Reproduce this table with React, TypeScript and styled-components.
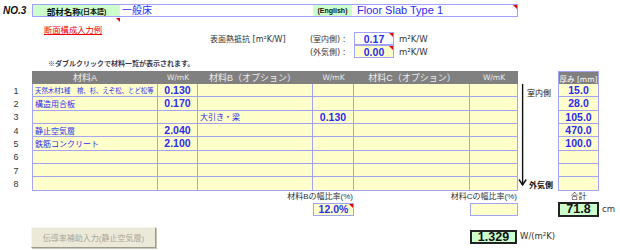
import React from "react";
import styled, { createGlobalStyle } from "styled-components";

const GlobalStyle = createGlobalStyle`
  html, body {
    margin: 0;
    padding: 0;
    background: #fff;
  }
  body {
    font-family: "Liberation Sans", "Noto Sans CJK JP", sans-serif;
  }
`;

// column widths shared by the table and the totals area
const COLS = "32px 126px 40px 115px 41px 116px 48px 40px 41px 21px";
const JP = `"Liberation Sans", "Noto Sans CJK JP", sans-serif`;
const VERDANA = `"DejaVu Sans", "Noto Sans CJK JP", sans-serif`;
const GRID = "#a3a3f5";
const BLUE = "#2b2bf0";

type Row = {
  a?: string;
  small?: boolean;
  wa?: string;
  b?: string;
  wb?: string;
  t?: string;
};

const rows: Row[] = [
  { a: "天然木材1種　檜、杉、えぞ松、とど松等", small: true, wa: "0.130", t: "15.0" },
  { a: "構造用合板", wa: "0.170", t: "28.0" },
  { b: "大引き・梁", wb: "0.130", t: "105.0" },
  { a: "静止空気層", wa: "2.040", t: "470.0" },
  { a: "鉄筋コンクリート", wa: "2.100", t: "100.0" },
  {},
  {},
  {},
];

export default function App() {
  return (
    <>
      <GlobalStyle />
      <Page>
        <TitleRow>
          <NoLabel>NO.3</NoLabel>
          <NameBar>
            <GreenTag $w={87}>
              <b>部材名称</b>
              <TagSmall>(日本語)</TagSmall>
            </GreenTag>
            <NameField $w={193}>一般床</NameField>
            <GreenTag $w={39}>
              <TagSmall>(English)</TagSmall>
            </GreenTag>
            <EnglishField>Floor Slab Type 1</EnglishField>
            <Corner />
          </NameBar>
        </TitleRow>

        <LinkRow>
          <LinkCell>
            <LinkText>断面構成入力例</LinkText>
            <Corner />
          </LinkCell>
        </LinkRow>

        <ResBlock>
          <ResRow>
            <ResTitle>表面熱抵抗 [m²K/W]</ResTitle>
            <SideLabel>(室内側) :</SideLabel>
            <InputBox $fill="#ffffff" $w={40}>
              0.17
              <Corner />
            </InputBox>
            <Unit>m²K/W</Unit>
          </ResRow>
          <ResRow>
            <ResTitle />
            <SideLabel>(外気側) :</SideLabel>
            <InputBox $fill="#ffffcc" $w={40}>
              0.00
              <Corner />
            </InputBox>
            <Unit>m²K/W</Unit>
          </ResRow>
        </ResBlock>

        <Note>※ダブルクリックで材料一覧が表示されます。</Note>

        <Table>
          <RowNum />
          <HeadCell $pr={20}>材料A</HeadCell>
          <HeadCell $small>W/mK</HeadCell>
          <HeadCell $pr={6}>材料B（オプション）</HeadCell>
          <HeadCell $small>W/mK</HeadCell>
          <HeadCell>材料C（オプション）</HeadCell>
          <HeadCell $small>W/mK</HeadCell>
          <Blank />
          <HeadCell $small $boxed>厚み [mm]</HeadCell>
          <Blank />

          <ArrowCol>
            <svg width="9" height="107" viewBox="0 0 9 107">
              <line x1="4.6" y1="0" x2="4.6" y2="101" stroke="#111" strokeWidth="1.4" />
              <polyline
                points="1,95.5 4.6,101 8.2,95.5"
                fill="none"
                stroke="#111"
                strokeWidth="1.4"
              />
            </svg>
            <SideTexts>
              <SideText>室内側</SideText>
              <SideText $bold>外気側</SideText>
            </SideTexts>
          </ArrowCol>

          {rows.map((r, i) => (
            <React.Fragment key={i}>
              <RowNum>{i + 1}</RowNum>
              <Cell $first>{r.a && <MatName $small={r.small}>{r.a}</MatName>}</Cell>
              <Cell $center>{r.wa && <Num>{r.wa}</Num>}</Cell>
              <Cell>{r.b && <MatName>{r.b}</MatName>}</Cell>
              <Cell $center>{r.wb && <Num>{r.wb}</Num>}</Cell>
              <Cell />
              <Cell />
              <Cell $first $center>{r.t && <Num>{r.t}</Num>}</Cell>
              <Blank />
            </React.Fragment>
          ))}
        </Table>

        <Totals>
          <SmallLabel $col="4 / 6" $row={1}>材料Bの幅比率(%)</SmallLabel>
          <SmallLabel $col="6 / 8" $row={1}>材料Cの幅比率(%)</SmallLabel>
          <SmallLabel $col="9" $row={1} $center>合計</SmallLabel>

          <Slot $col="5" $row={2}>
            <InputBox $fill="#ffffcc" $w={41}>
              12.0%
              <Corner />
            </InputBox>
          </Slot>
          <Slot $col="7" $row={2}>
            <InputBox $fill="#ffffcc" $w={48} />
          </Slot>
          <Slot $col="9" $row={2}>
            <ResultBox $w={41} $h={15} $shift={-1}>71.8</ResultBox>
          </Slot>
          <Slot $col="10" $row={2}>
            <Unit $pad={3} $top={1}>cm</Unit>
          </Slot>

          <Slot $col="2 / 4" $row={4}>
            <AuxButton disabled>伝導率補助入力(静止空気層)</AuxButton>
          </Slot>
          <Slot $col="7" $row={4}>
            <ResultBox $w={47} $h={14} $shift={3}>1.329</ResultBox>
          </Slot>
          <Slot $col="8 / 11" $row={4}>
            <Unit $pad={2} $top={4}>W/(m²K)</Unit>
          </Slot>
        </Totals>
      </Page>
    </>
  );
}

const Page = styled.div`
  width: 620px;
  height: 250px;
  overflow: hidden;
  background: #fff;
  color: #222;
`;

const TitleRow = styled.div`
  display: flex;
  align-items: center;
  height: 13px;
  padding-top: 4px;
`;

const NoLabel = styled.div`
  box-sizing: border-box;
  width: 32px;
  padding-left: 3px;
  font: italic bold 10px "Liberation Sans", sans-serif;
  color: #111;
`;

const NameBar = styled.div`
  position: relative;
  box-sizing: border-box;
  display: flex;
  width: 486px;
  height: 13px;
  border: 1px solid #a0a0ff;
  border-right-color: #a8a8a8;
`;

const GreenTag = styled.div<{ $w: number }>`
  width: ${(p) => p.$w}px;
  flex: none;
  background: #ccffcc;
  display: flex;
  align-items: center;
  justify-content: center;
  font-family: ${JP};
  font-size: 8.5px;
  color: #111;
  white-space: nowrap;
`;

const TagSmall = styled.span`
  font-size: 7px;
  font-weight: bold;
`;

const NameField = styled.div<{ $w: number }>`
  width: ${(p) => p.$w}px;
  flex: none;
  padding-left: 2px;
  box-sizing: border-box;
  font-family: ${JP};
  font-size: 10px;
  line-height: 11px;
  color: ${BLUE};
`;

const EnglishField = styled.div`
  flex: 1;
  padding-left: 5px;
  font: 11px "Liberation Sans", sans-serif;
  line-height: 11px;
  color: ${BLUE};
`;

const Corner = styled.span`
  position: absolute;
  top: 0;
  right: 0;
  width: 0;
  height: 0;
  border-top: 4px solid #e00000;
  border-left: 4px solid transparent;
`;

const LinkRow = styled.div`
  height: 13px;
`;

const LinkCell = styled.div`
  position: relative;
  box-sizing: border-box;
  margin-left: 32px;
  width: 88px;
  height: 13px;
  padding: 1px 0 0 12px;
  margin-top: 1px;
`;

const LinkText = styled.span`
  font-family: ${JP};
  font-size: 8.3px;
  line-height: 11px;
  color: #f00000;
  text-decoration: underline;
`;

const ResBlock = styled.div`
  padding-top: 1px;
`;

const ResRow = styled.div`
  display: flex;
  align-items: center;
  height: 13px;
`;

const ResTitle = styled.div`
  margin-left: 210px;
  width: 100px;
  font-family: ${VERDANA};
  font-size: 8px;
  color: #333;
  white-space: nowrap;
`;

const SideLabel = styled.div`
  width: 44px;
  font-family: ${VERDANA};
  font-size: 8px;
  color: #333;
  white-space: nowrap;
`;

const InputBox = styled.div<{ $fill: string; $w: number }>`
  position: relative;
  box-sizing: border-box;
  width: ${(p) => p.$w}px;
  height: 13px;
  background: ${(p) => p.$fill};
  border: 1px solid ${GRID};
  display: flex;
  align-items: center;
  justify-content: center;
  font: bold 10.5px "Liberation Sans", sans-serif;
  color: ${BLUE};
`;

const Unit = styled.div<{ $pad?: number; $top?: number }>`
  padding-left: ${(p) => p.$pad ?? 5}px;
  padding-top: ${(p) => p.$top ?? 0}px;
  font-family: ${VERDANA};
  font-size: 8.5px;
  color: #333;
  white-space: nowrap;
`;

const Note = styled.div`
  height: 13px;
  padding-left: 48px;
  font-family: ${JP};
  font-size: 7px;
  font-weight: bold;
  line-height: 12px;
  color: #3a3a55;
`;

const Table = styled.div`
  display: grid;
  grid-template-columns: ${COLS};
  grid-template-rows: 13px repeat(8, 13.33px);
`;

const RowNum = styled.div`
  display: flex;
  align-items: center;
  justify-content: center;
  font: 9px "Liberation Sans", sans-serif;
  color: #333;
`;

const Blank = styled.div``;

const HeadCell = styled.div<{ $small?: boolean; $boxed?: boolean; $pr?: number }>`
  box-sizing: border-box;
  background: #808080;
  color: #ececec;
  display: flex;
  align-items: center;
  justify-content: center;
  padding-right: ${(p) => p.$pr ?? 0}px;
  font-family: ${(p) => (p.$small ? VERDANA : JP)};
  font-size: ${(p) => (p.$small ? 7.5 : 9)}px;
  white-space: nowrap;
  ${(p) => p.$boxed && `border: 1px solid ${GRID}; border-bottom: none; color: #fff;`}
`;

const Cell = styled.div<{ $first?: boolean; $center?: boolean }>`
  box-sizing: border-box;
  background: #ffffcc;
  border-right: 1px solid ${GRID};
  border-bottom: 1px solid ${GRID};
  ${(p) => p.$first && `border-left: 1px solid ${GRID};`}
  display: flex;
  align-items: center;
  justify-content: ${(p) => (p.$center ? "center" : "flex-start")};
  padding: 0 2px;
  overflow: hidden;
  white-space: nowrap;
`;

const MatName = styled.span<{ $small?: boolean }>`
  font-family: ${JP};
  font-size: ${(p) => (p.$small ? 6.4 : 8)}px;
  color: ${BLUE};
`;

const Num = styled.span`
  font: bold 10.5px "Liberation Sans", sans-serif;
  color: ${BLUE};
`;

const ArrowCol = styled.div`
  grid-column: 8;
  grid-row: 2 / span 8;
  display: flex;
`;

const SideTexts = styled.div`
  display: flex;
  flex-direction: column;
  justify-content: space-between;
  padding: 3px 0 1px;
`;

const SideText = styled.div<{ $bold?: boolean }>`
  font-family: ${JP};
  font-size: 8px;
  font-weight: ${(p) => (p.$bold ? "bold" : "normal")};
  padding-left: ${(p) => (p.$bold ? 2 : 0)}px;
  color: #111;
  white-space: nowrap;
`;

const Totals = styled.div`
  display: grid;
  grid-template-columns: ${COLS};
  grid-template-rows: 12px 15px 9px 21px;
`;

const SmallLabel = styled.div<{ $col: string; $row: number; $center?: boolean }>`
  grid-column: ${(p) => p.$col};
  grid-row: ${(p) => p.$row};
  text-align: ${(p) => (p.$center ? "center" : "right")};
  padding-right: ${(p) => (p.$center ? 0 : 1)}px;
  font-family: ${JP};
  font-size: 8px;
  line-height: 12px;
  color: #333;
  white-space: nowrap;
`;

const Slot = styled.div<{ $col: string; $row: number }>`
  grid-column: ${(p) => p.$col};
  grid-row: ${(p) => p.$row};
  display: flex;
  align-items: flex-start;
`;

const ResultBox = styled.div<{ $w: number; $h: number; $shift: number }>`
  box-sizing: border-box;
  width: ${(p) => p.$w}px;
  height: ${(p) => p.$h}px;
  margin-top: ${(p) => p.$shift}px;
  background: #ccffcc;
  border: 2px solid #222;
  display: flex;
  align-items: center;
  justify-content: center;
  font: bold 12.5px "Liberation Sans", sans-serif;
  color: #111;
`;

const AuxButton = styled.button`
  box-sizing: border-box;
  width: 125px;
  height: 21px;
  margin-left: -1px;
  padding: 0;
  background: #ece9d8;
  border: 1px solid;
  border-color: #f6f5ef #9d9a8a #9d9a8a #f6f5ef;
  box-shadow: 1px 1px 0 #c9c6b6;
  font-family: ${JP};
  font-size: 8px;
  color: #aaa696;
`;
